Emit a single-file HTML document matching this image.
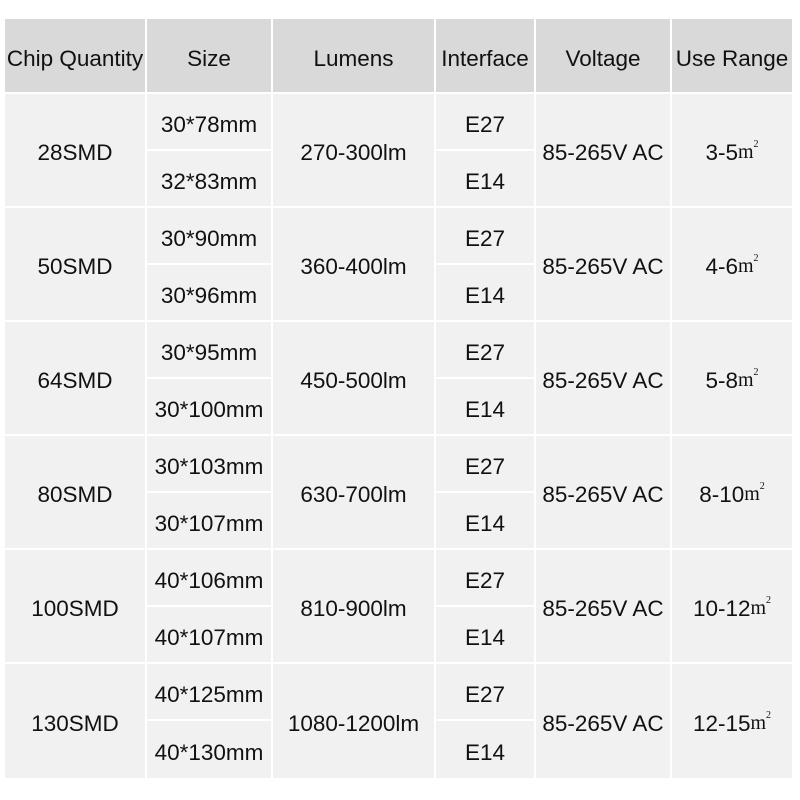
<!DOCTYPE html>
<html><head><meta charset="utf-8"><style>
body{margin:0;width:800px;height:800px;background:#fff;position:relative;overflow:hidden;font-family:"Liberation Sans",Arial,sans-serif;font-size:22.5px;color:#111}
.c{position:absolute;display:flex;align-items:center;justify-content:center;background:#f1f1f1;box-sizing:border-box;border-right:2px solid #fff;border-bottom:2px solid #fff;white-space:nowrap;padding-top:6px}
.h{background:#d9d9d9}
.m{font-family:"Liberation Serif",serif;font-size:20px;position:relative;top:-1px}
.m sup{font-size:10px;vertical-align:top;position:relative;top:-2px}
</style></head><body>
<div class="c h" style="left:5px;top:19px;width:142px;height:75px">Chip Quantity</div>
<div class="c h" style="left:147px;top:19px;width:126px;height:75px">Size</div>
<div class="c h" style="left:273px;top:19px;width:163px;height:75px">Lumens</div>
<div class="c h" style="left:436px;top:19px;width:100px;height:75px">Interface</div>
<div class="c h" style="left:536px;top:19px;width:136px;height:75px">Voltage</div>
<div class="c h" style="left:672px;top:19px;width:122px;height:75px">Use Range</div>

<div class="c" style="left:5px;top:94px;width:142px;height:114px">28SMD</div>
<div class="c" style="left:147px;top:94px;width:126px;height:57px">30*78mm</div>
<div class="c" style="left:147px;top:151px;width:126px;height:57px">32*83mm</div>
<div class="c" style="left:273px;top:94px;width:163px;height:114px">270-300lm</div>
<div class="c" style="left:436px;top:94px;width:100px;height:57px">E27</div>
<div class="c" style="left:436px;top:151px;width:100px;height:57px">E14</div>
<div class="c" style="left:536px;top:94px;width:136px;height:114px">85-265V AC</div>
<div class="c" style="left:672px;top:94px;width:122px;height:114px">3-5<span class="m">m<sup>2</sup></span></div>

<div class="c" style="left:5px;top:208px;width:142px;height:114px">50SMD</div>
<div class="c" style="left:147px;top:208px;width:126px;height:57px">30*90mm</div>
<div class="c" style="left:147px;top:265px;width:126px;height:57px">30*96mm</div>
<div class="c" style="left:273px;top:208px;width:163px;height:114px">360-400lm</div>
<div class="c" style="left:436px;top:208px;width:100px;height:57px">E27</div>
<div class="c" style="left:436px;top:265px;width:100px;height:57px">E14</div>
<div class="c" style="left:536px;top:208px;width:136px;height:114px">85-265V AC</div>
<div class="c" style="left:672px;top:208px;width:122px;height:114px">4-6<span class="m">m<sup>2</sup></span></div>

<div class="c" style="left:5px;top:322px;width:142px;height:114px">64SMD</div>
<div class="c" style="left:147px;top:322px;width:126px;height:57px">30*95mm</div>
<div class="c" style="left:147px;top:379px;width:126px;height:57px">30*100mm</div>
<div class="c" style="left:273px;top:322px;width:163px;height:114px">450-500lm</div>
<div class="c" style="left:436px;top:322px;width:100px;height:57px">E27</div>
<div class="c" style="left:436px;top:379px;width:100px;height:57px">E14</div>
<div class="c" style="left:536px;top:322px;width:136px;height:114px">85-265V AC</div>
<div class="c" style="left:672px;top:322px;width:122px;height:114px">5-8<span class="m">m<sup>2</sup></span></div>

<div class="c" style="left:5px;top:436px;width:142px;height:114px">80SMD</div>
<div class="c" style="left:147px;top:436px;width:126px;height:57px">30*103mm</div>
<div class="c" style="left:147px;top:493px;width:126px;height:57px">30*107mm</div>
<div class="c" style="left:273px;top:436px;width:163px;height:114px">630-700lm</div>
<div class="c" style="left:436px;top:436px;width:100px;height:57px">E27</div>
<div class="c" style="left:436px;top:493px;width:100px;height:57px">E14</div>
<div class="c" style="left:536px;top:436px;width:136px;height:114px">85-265V AC</div>
<div class="c" style="left:672px;top:436px;width:122px;height:114px">8-10<span class="m">m<sup>2</sup></span></div>

<div class="c" style="left:5px;top:550px;width:142px;height:114px">100SMD</div>
<div class="c" style="left:147px;top:550px;width:126px;height:57px">40*106mm</div>
<div class="c" style="left:147px;top:607px;width:126px;height:57px">40*107mm</div>
<div class="c" style="left:273px;top:550px;width:163px;height:114px">810-900lm</div>
<div class="c" style="left:436px;top:550px;width:100px;height:57px">E27</div>
<div class="c" style="left:436px;top:607px;width:100px;height:57px">E14</div>
<div class="c" style="left:536px;top:550px;width:136px;height:114px">85-265V AC</div>
<div class="c" style="left:672px;top:550px;width:122px;height:114px">10-12<span class="m">m<sup>2</sup></span></div>

<div class="c" style="left:5px;top:664px;width:142px;height:114px;border-bottom:0">130SMD</div>
<div class="c" style="left:147px;top:664px;width:126px;height:57px">40*125mm</div>
<div class="c" style="left:147px;top:721px;width:126px;height:57px;border-bottom:0">40*130mm</div>
<div class="c" style="left:273px;top:664px;width:163px;height:114px;border-bottom:0">1080-1200lm</div>
<div class="c" style="left:436px;top:664px;width:100px;height:57px">E27</div>
<div class="c" style="left:436px;top:721px;width:100px;height:57px;border-bottom:0">E14</div>
<div class="c" style="left:536px;top:664px;width:136px;height:114px;border-bottom:0">85-265V AC</div>
<div class="c" style="left:672px;top:664px;width:122px;height:114px;border-bottom:0">12-15<span class="m">m<sup>2</sup></span></div>
</body></html>
